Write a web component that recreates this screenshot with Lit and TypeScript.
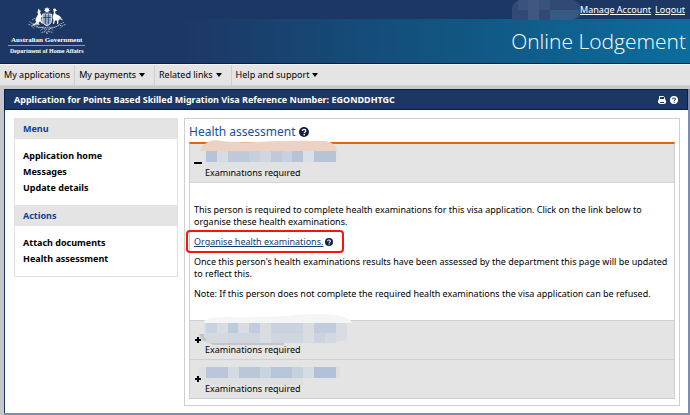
import { LitElement, html, svg, css } from "lit";
import { customElement, property, state } from "lit/decorators.js";

type Block = [number, number, number, number, string];

const helpIcon = html`<svg class="help" viewBox="0 0 18 18" aria-hidden="true">
  <circle cx="9" cy="9" r="9" fill="currentColor"></circle>
  <path d="M6 7.2c0-4 6.2-3.6 6.2-.2 0 2-2.8 2.2-2.8 4.2" fill="none" stroke="var(--mark, #fff)" stroke-width="2.3"></path>
  <rect x="8.1" y="12.6" width="2.6" height="2.5" fill="var(--mark, #fff)"></rect>
</svg>`;

const crest = html`<svg class="crest" viewBox="0 0 76 56" role="img" aria-label="Coat of arms">
  <g fill="#fff">
    <path d="M38 0l1.6 3.2 3.5-.8-1.6 3.2 2.8 2.2-3.5.8v3.4L38 10l-2.8 2v-3.400l-3.500-.8 2.800-2.200-1.600-3.200 3.500.8z"></path>
    <path d="M21 3l2 3 3 2-2 2.500 2 5 4 5-1 2-3-3 1 8 3 5-2 1-4-5-3 4 3 3-8-.5 3-4c-4-1-5-5-3-9l4-7-1-5z"></path>
    <path d="M9 35c5-1 7-4 9-9l2 2c-2 6-5 9-11 9z"></path>
    <path d="M50 5c2-3 6-2 6 1l3 2-4 0c-1 3-1 5 2 7 6 1 10 5 11 12l-4-3-3 3-1 7h-2l0-7-4 0-2 7h-2l1-8c-3-4-2-8 0-12 1-3 1-5-1-9z"></path>
  </g>
  <path d="M29 14h18v13c0 6-4 8-9 11-5-3-9-5-9-11z" fill="#8fa0bd" stroke="#fff" stroke-width="1.600"></path>
  <path d="M29 21h18M35 14v20M41 14v20" stroke="#1d3765" stroke-width="1.300"></path>
  <g fill="none" stroke="#b8c3d5" stroke-width="1.700" stroke-dasharray="3 1.300">
    <path d="M3 29c5 6 10 3 15 9s14 0 20 4c6-4 14 2 20-4s10-3 15-9"></path>
    <path d="M7 38c8-3 10 5 17 3s9 2 14 4c5-2 7-2 14-4s9-6 17-3"></path>
    <path d="M1 35c5 0 7 4 11 8M75 35c-5 0-7 4-11 8M14 22l-7 5M64 22l7 5"></path>
    <path d="M25 47l6-5 5 7 2 5 2-5 5-7 6 5M27 51l8-2M41 49l9 2"></path>
  </g>
</svg>`;

@customElement("accordion-row")
class AccordionRow extends LitElement {
  @property({ type: Boolean }) open = false;
  @property({ attribute: false }) smear: string[][] = [];
  @property({ attribute: false }) blocks: Block[] = [];

  static styles = css`
    :host { display: block; border-bottom: 1px solid #cfcfcf; }
    .head {
      position: relative; display: flex; align-items: center; gap: 3px;
      width: 100%; height: 38px; padding: 0 4px; border: 0;
      background: #e4e4e4; color: #000; text-align: left;
      font: 9px/14px "Noto Sans", "Open Sans", sans-serif;
    }
    .sign { position: relative; z-index: 1; width: 8px; height: 8px; flex: none; }
    .text { align-self: flex-end; padding-bottom: 2px; }
    .cover { position: absolute; left: 0; top: 0; width: 170px; height: 38px; overflow: visible; }
    .body { background: #fff; border-top: 1px solid #d4d4d4; }
  `;

  render() {
    return html`
      <button class="head" aria-expanded=${this.open} @click=${() => (this.open = !this.open)}>
        <svg class="sign" viewBox="0 0 8 8" aria-hidden="true">
          <path d=${this.open ? "M0 4h8" : "M1 4h6M4 1v6"} stroke="#000" stroke-width="2"></path>
        </svg>
        <span class="text">Examinations required</span>
        <svg class="cover" viewBox="0 0 170 38" aria-hidden="true">
          ${this.smear.map(([d, fill]) => svg`<path d=${d} fill=${fill}></path>`)}
          ${this.blocks.map(([x, y, w, h, fill]) => svg`<rect x=${x} y=${y} width=${w} height=${h} fill=${fill}></rect>`)}
        </svg>
      </button>
      ${this.open ? html`<div class="body"><slot></slot></div>` : ""}
    `;
  }
}

const rows: { open: boolean; smear: string[][]; blocks: Block[] }[] = [
  {
    open: true,
    smear: [
      ["M10 6Q16-4 25-4Q42-1 66-2Q104-4 134-3Q146-2 147 7H10Z", "#edd1c2"],
      ["M14 7H146Q151 12 146 18H113V26H24L14 20Z", "#e0e1e3"],
    ],
    blocks: [
      [16, 7, 11, 11, "#b5c4d7"], [27, 7, 11, 11, "#d5dce4"], [38, 7, 21, 11, "#bdcad9"],
      [59, 7, 11, 11, "#c7d1dd"], [70, 7, 11, 11, "#d0d7df"], [81, 7, 11, 11, "#bccada"],
      [92, 7, 10, 11, "#c7d1dd"], [102, 7, 11, 11, "#b7c4d7"], [113, 7, 11, 11, "#dadfe5"],
      [124, 7, 22, 11, "#b7c4d6"],
    ],
  },
  {
    open: false,
    smear: [
      ["M14 0Q18-4 40-4Q80-3 120-7Q157-8 162 1V2H14Z", "#f4f6f5"],
      ["M9 13H94V24H24L12 19Z", "#c3c4c5"],
      ["M14 2H157V19Q147 22 125 22H24L14 16Z", "#d9dde1"],
    ],
    blocks: [
      [16, 2, 11, 10, "#c9d3df"], [27, 2, 11, 10, "#d8dde3"], [38, 2, 10, 10, "#bccadb"],
      [59, 2, 11, 10, "#c1cddd"], [81, 2, 32, 10, "#c9d2de"], [124, 2, 22, 10, "#c1cddc"],
      [16, 12, 22, 10, "#d3d9df"], [38, 12, 32, 10, "#cfd6df"], [81, 12, 32, 10, "#ced6df"],
      [124, 12, 11, 10, "#cbd4de"], [135, 12, 11, 10, "#d3d9e0"],
    ],
  },
  {
    open: false,
    smear: [["M8 7H150V18H113V25H24L8 18Z", "#dedfe0"]],
    blocks: [
      [16, 7, 22, 11, "#bac7da"], [38, 7, 11, 11, "#d4dae2"], [49, 7, 21, 11, "#b9c7d9"],
      [70, 7, 11, 11, "#cbd3de"], [81, 7, 21, 11, "#b7c5d8"], [102, 7, 11, 11, "#c7d0dc"],
      [113, 7, 11, 11, "#d7dce2"], [124, 7, 22, 11, "#b2c1d7"],
    ],
  },
];

const menus = [
  { title: "Menu", items: ["Application home", "Messages", "Update details"] },
  { title: "Actions", items: ["Attach documents", "Health assessment"] },
];

@customElement("app-root")
class AppRoot extends LitElement {
  @state() private nav = [
    { label: "My applications", drop: false },
    { label: "My payments", drop: true },
    { label: "Related links", drop: true },
    { label: "Help and support", drop: true },
  ];

  static styles = css`
    :host {
      display: flex; flex-direction: column; min-height: 100vh; box-sizing: border-box;
      background: #c5c7ca; color: #000;
      font: 9px/12px "Noto Sans", "Open Sans", sans-serif;
    }
    * { box-sizing: border-box; }
    a { color: inherit; text-decoration: none; }
    ul { list-style: none; margin: 0; padding: 0; }
    h1, h2, p { margin: 0; }
    .top {
      display: flex; justify-content: space-between; height: 64px; color: #fff;
      background: linear-gradient(#1d3765, #1d3765) 0 0 / 100% 19px no-repeat,
        linear-gradient(90deg, #1d3765 26%, #12537f 62%, #0c6d9c 100%);
      border-bottom: 1px solid #08214d;
    }
    .brand {
      display: flex; flex-direction: column; align-items: center; align-self: flex-start;
      margin: 7px 0 0 8px; font: bold 7px/10px "Liberation Serif", serif;
    }
    .crest { width: 38px; height: 28px; }
    .brand .dept { border-top: 1px solid #8a9ab5; padding: 0 2px; font-size: 6px; }
    .tools { display: flex; flex-direction: column; align-items: flex-end; }
    .account { display: flex; gap: 4px; height: 19px; align-items: center; padding-right: 5px; }
    .account a { text-decoration: underline; }
    .user { width: 70px; height: 20px; align-self: flex-start; margin-right: -6px; }
    .product { padding: 6px 4px 0 0; font: 300 21px/32px "Open Sans", "Noto Sans", sans-serif; }
    .nav { background: #e4e4e4; border-top: 1px solid #f4f4f4; border-bottom: 1px solid #d2d2d2; }
    .nav ul { display: flex; height: 20px; }
    .nav li { display: flex; align-items: center; padding: 0 4px; border-right: 1px solid #cfcfcf; }
    .nav li.drop { padding: 0 9px 0 4px; }
    .nav li:last-child { border: 0; }
    .nav a { display: flex; align-items: center; gap: 3px; }
    .caret { border: 3px solid transparent; border-top: 4px solid #000; border-bottom: 0; }
    .panel {
      flex: 1; display: flex; flex-direction: column; margin: 3px 0 0 4px; background: #fff;
      border: solid #7f8cab; border-width: 0 2px 2px 0;
    }
    .bar {
      display: flex; align-items: center; gap: 4px; height: 21px; padding: 0 9px 0 9px;
      background: #1d3765; border: 1px solid #061d50; color: #fff;
    }
    .bar h1 { flex: 1; font: bold 9px/16px "Noto Sans", sans-serif; }
    .bar button, .hint { display: flex; border: 0; padding: 0; background: none; color: inherit; }
    .bar svg { width: 8px; height: 8px; }
    .bar .help { --mark: #1d3765; }
    .main {
      flex: 1; display: flex; align-items: flex-start; gap: 6px;
      padding: 8px 8px 7px 9px; border-left: 1px solid #1d3765;
    }
    .side { flex: 0 0 164px; border: 1px solid #e0e0e0; border-top: 0; }
    .side h2 {
      background: #e4e4e4; color: #0c3f94; font: bold 9px/21px "Noto Sans", sans-serif; padding-left: 8px;
    }
    .side ul { padding: 9px 8px; font-weight: bold; line-height: 16px; }
    .content { flex: 1; align-self: stretch; border: 1px solid #cfcfcf; padding: 4px 4px 6px; }
    .content h2 {
      display: flex; align-items: center; gap: 3px; color: #1451a0;
      font: 12px/18px "Noto Sans", sans-serif; margin-bottom: 1px;
    }
    .hint { color: #0d2148; }
    .hint.big svg { width: 10px; height: 10px; }
    .hint svg { width: 8px; height: 8px; }
    .rows { border: 1px solid #cfcfcf; border-top: 2px solid #e3660f; border-bottom: 0; }
    .detail { display: flex; flex-direction: column; gap: 8px; padding: 21px 4px 20px; }
    .organise { display: flex; align-items: center; gap: 2px; height: 12px; position: relative; align-self: flex-start; color: #173a6d; }
    .organise a { text-decoration: underline; }
    .marker {
      position: absolute; inset: -6px -11px -5px -8px; border: 2px solid #f81408;
      border-radius: 4px; pointer-events: none;
    }
  `;

  render() {
    return html`
      <header class="top">
        <div class="brand">
          ${crest}
          <span>Australian Government</span>
          <span class="dept">Department of Home Affairs</span>
        </div>
        <div class="tools">
          <div class="account">
            <svg class="user" viewBox="0 0 70 20" aria-hidden="true">
              <path d="M0 20V8Q2 0 10 0H62Q70 4 70 12Q69 18 60 20Z" fill="#314a75"></path>
              <path d="M6 0h10v10H6zM27 0h11v10H27z" fill="#3b537c"></path>
              <path d="M16 0h11v20H16z" fill="#405781"></path>
              <path d="M38 10h30q-2 8-8 10H38z" fill="#355a84"></path>
            </svg>
            <a href="#account">Manage Account</a>
            <a href="#logout">Logout</a>
          </div>
          <div class="product">Online Lodgement</div>
        </div>
      </header>
      <nav class="nav">
        <ul>
          ${this.nav.map(
            (n) => html`<li class=${n.drop ? "drop" : ""}>
              <a href="#nav">${n.label}${n.drop ? html`<span class="caret"></span>` : ""}</a>
            </li>`
          )}
        </ul>
      </nav>
      <section class="panel">
        <div class="bar">
          <h1>Application for Points Based Skilled Migration Visa Reference Number: EGONDDHTGC</h1>
          <button aria-label="Print">
            <svg viewBox="0 0 16 16" aria-hidden="true">
              <path d="M3 8V1h8l2 2v5M1 14V9q0-2 2-2h10q2 0 2 2v5h-2M1 13h2" fill="none" stroke="#fff" stroke-width="2"></path>
              <path d="M1 8h14v4H1z" fill="#fff"></path>
              <path d="M3 11h10v4H3z" fill="#1d3765" stroke="#fff" stroke-width="2"></path>
            </svg>
          </button>
          <button aria-label="Help">${helpIcon}</button>
        </div>
        <div class="main">
          <aside class="side">
            ${menus.map(
              (m) => html`<h2>${m.title}</h2>
                <ul>${m.items.map((i) => html`<li><a href="#menu">${i}</a></li>`)}</ul>`
            )}
          </aside>
          <main class="content">
            <h2>Health assessment <button class="hint big" aria-label="Help">${helpIcon}</button></h2>
            <div class="rows">
              ${rows.map(
                (r, i) => html`<accordion-row .open=${r.open} .smear=${r.smear} .blocks=${r.blocks}>
                  ${i === 0
                    ? html`<div class="detail">
                        <p>This person is required to complete health examinations for this visa application. Click on the link below to organise these health examinations.</p>
                        <div class="organise">
                          <a href="#organise">Organise health examinations.</a>
                          <button class="hint" aria-label="Help">${helpIcon}</button>
                          <span class="marker"></span>
                        </div>
                        <p>Once this person's health examinations results have been assessed by the department this page will be updated to reflect this.</p>
                        <p>Note: If this person does not complete the required health examinations the visa application can be refused.</p>
                      </div>`
                    : ""}
                </accordion-row>`
              )}
            </div>
          </main>
        </div>
      </section>
    `;
  }
}
